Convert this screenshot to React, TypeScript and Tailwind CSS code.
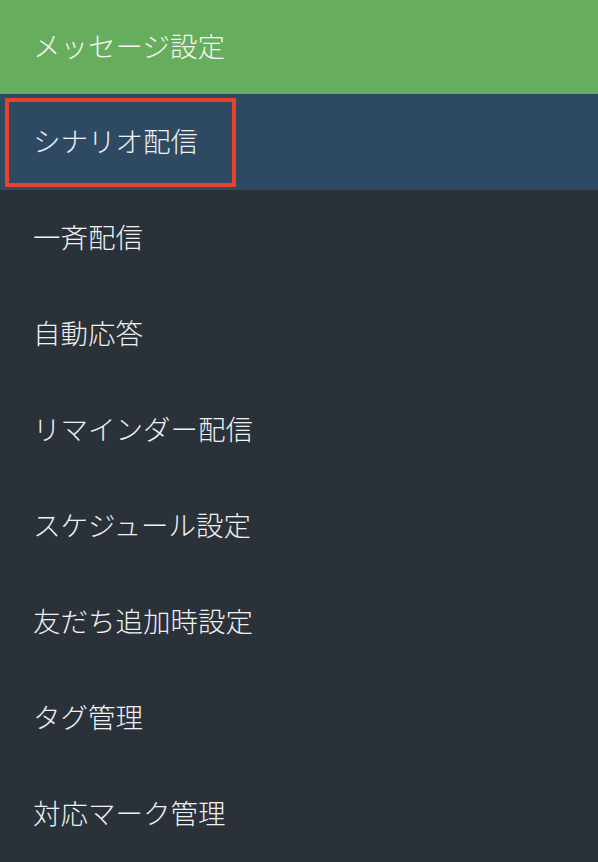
const items = [
  "一斉配信",
  "自動応答",
  "リマインダー配信",
  "スケジュール設定",
  "友だち追加時設定",
  "タグ管理",
  "対応マーク管理",
];

export default function App() {
  return (
    <div
      className="w-[598px] h-[862px] bg-[#2a3139] text-white overflow-hidden font-light"
      style={{ fontFamily: '"Noto Sans CJK JP", "Noto Sans", sans-serif' }}
    >
      <div className="h-[94px] bg-[#67ad5e] flex items-center pl-[33px] pb-[3px] text-[27.5px] text-[#f4f6f4]">
        メッセージ設定
      </div>
      <div className="relative h-[96px] bg-[#2e4a62] flex items-center pl-[33px] pb-[3px] text-[27.5px] text-[#eef1f4]">
        シナリオ配信
        <div className="absolute left-[5px] top-[4px] w-[231px] h-[89px] border-4 border-[#e5432b] rounded-[1px]" />
      </div>
      {items.map((label) => (
        <div
          key={label}
          className="h-[96px] flex items-center pl-[33px] pb-[3px] text-[27.5px] text-[#eef0f2]"
        >
          {label}
        </div>
      ))}
    </div>
  );
}
